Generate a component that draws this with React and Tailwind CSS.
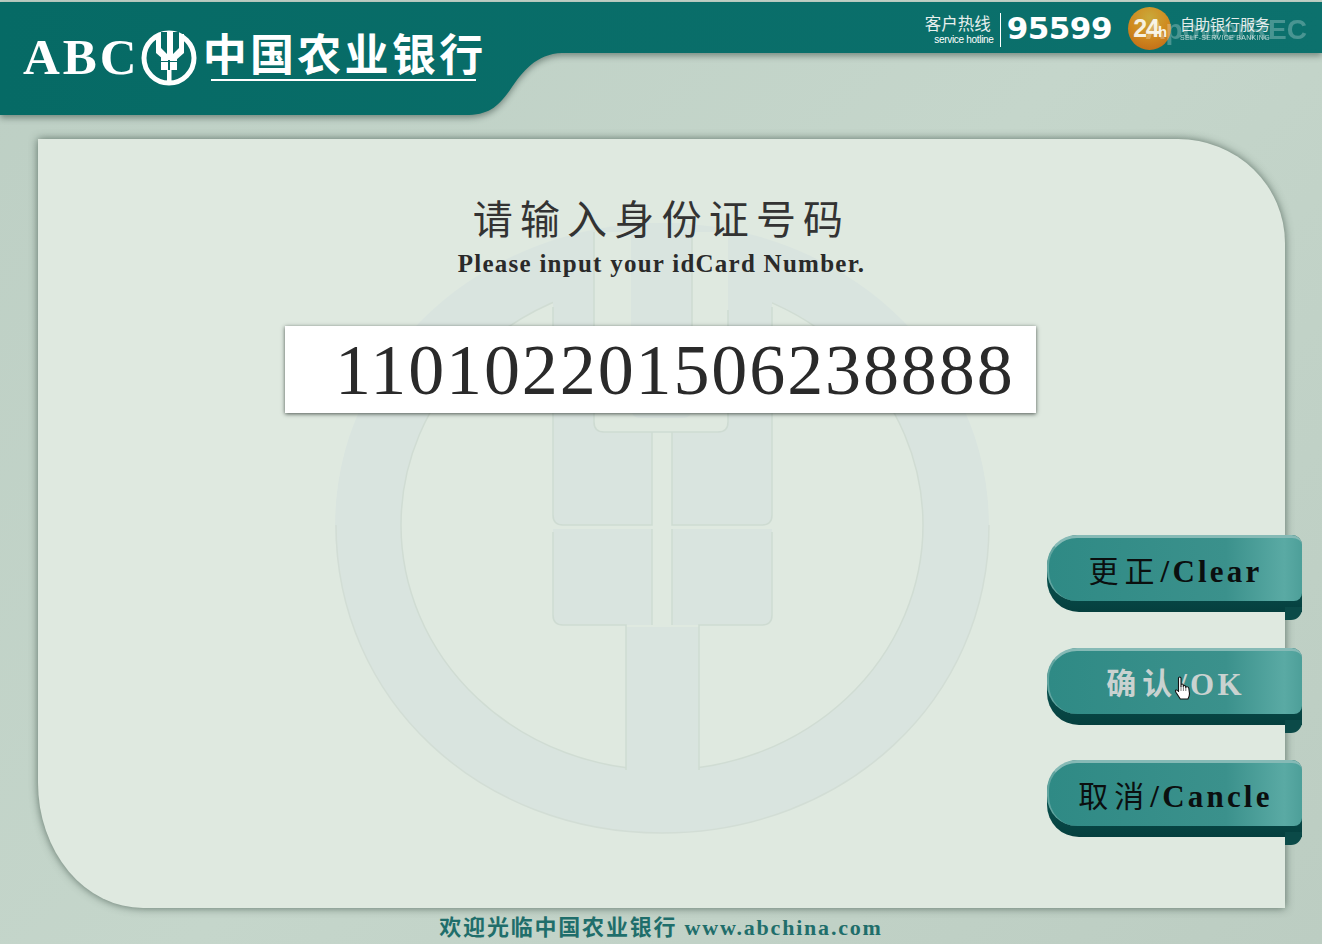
import React from "react";

const SERIF = "font-['Liberation_Serif','Noto_Sans_CJK_SC',serif]";

const buttons = [
    { zh: "更正", en: "/Clear", color: "text-[#0b0f0f]", weight: "font-normal" },
    { zh: "确认", en: "/OK", color: "text-[#c9d2d0]", weight: "font-bold" },
    { zh: "取消", en: "/Cancle", color: "text-[#0b0f0f]", weight: "font-normal" },
];

const HeaderShape = () => (
    <svg
        className="absolute inset-0 drop-shadow-[0_3px_3px_rgba(30,50,45,0.45)]"
        width="1322"
        height="120"
        viewBox="0 0 1322 120"
    >
        <defs>
            <linearGradient id="bar" x1="0" x2="1" y1="0" y2="0">
                <stop offset="0" stopColor="#066a65" />
                <stop offset="1" stopColor="#0c716d" />
            </linearGradient>
        </defs>
        <path
            d="M0 2H1322V53H562C536 54 523 71 510 90C497 108 488 115 465 115H0Z"
            fill="url(#bar)"
        />
    </svg>
);

const LogoMark = () => (
    <svg width="70" height="70" viewBox="0 0 70 70" className="-mx-[8px] -my-[8px]">
        <circle cx="35" cy="36" r="25" fill="none" stroke="#fff" strokeWidth="5" />
        <path d="M22 12h5v14l6 6v-22h6v22l6-6V12h5v19l-8 7H30l-8-7Z" fill="#fff" />
        <path d="M27 10h6v20l-6-5ZM39 10h6v15l-6 5Z" fill="#066a65" />
        <path d="M27 40h7v8h-7ZM36 40h7v8h-7ZM27 34h7v5h-7ZM36 34h7v5h-7Z" fill="#fff" />
        <rect x="33" y="48" width="4.5" height="13" fill="#fff" />
    </svg>
);

const Watermark = () => (
    <svg
        className="absolute inset-0"
        width="1247"
        height="769"
        viewBox="38 139 1247 769"
    >
        <defs>
            <clipPath id="ringClip">
                <ellipse cx="662" cy="525" rx="327" ry="302" />
            </clipPath>
        </defs>
        <ellipse cx="662" cy="525" rx="327" ry="308" fill="#d9e4df" clipPath="url(#ringClip)" />
        <path d="M336 525C336 700 480 833 662 833C845 833 989 700 989 525" fill="#d9e4df" stroke="#d2ddd5" strokeWidth="1.5" />
        <ellipse cx="662" cy="525" rx="261" ry="245" fill="#dfe9e0" stroke="#d0dcd3" strokeWidth="1.5" />
        <g clipPath="url(#ringClip)">
            <path d="M553 260H772V515Q772 525 762 525H672V625H652V525H563Q553 525 553 515Z" fill="#d9e4df" />
            <path d="M594 232H728V422Q728 432 718 432H604Q594 432 594 422Z" fill="#dfe9e0" />
            <path d="M631 200H692V408Q692 418 682 418H641Q631 418 631 408Z" fill="#d9e4df" />
            <path d="M652 432H672V625H652Z" fill="#dfe9e0" />
            <path d="M553 529H652V625H563Q553 625 553 615ZM672 529H772V615Q772 625 762 625H672Z" fill="#d9e4df" />
            <rect x="626" y="627" width="73" height="148" fill="#d9e4df" />
        </g>
        <g fill="none" stroke="#cedbd2" strokeWidth="1.5">
            <path d="M594 232V422Q594 432 604 432H718Q728 432 728 422V310" />
            <path d="M692 232V408" />
            <path d="M553 307V515Q553 525 563 525H652V432M672 432V525H762Q772 525 772 515V307" />
            <path d="M553 532V615Q553 625 563 625H626V770M699 770V625H762Q772 625 772 615V532" />
            <path d="M652 529V625M672 529V625" />
        </g>
    </svg>
);

const HandCursor = () => (
    <svg
        className="absolute left-[127px] top-[28px]"
        width="18"
        height="25"
        viewBox="0 0 18 25"
    >
        <path
            d="M4.5 2.2C4.5.6 7 .6 7 2.2V10.5V9C7 7.6 9.3 7.6 9.3 9V10.5C9.3 9.2 11.7 9.2 11.7 10.7V11.5C11.7 10.4 14.6 10.4 14.8 12.3L15.5 17.5C15.6 20 14.6 21.6 13.9 23H6.3L1.9 16.2C.6 14 2.5 12.9 4.5 15.5Z"
            fill="#fff"
            stroke="#111"
            strokeWidth="1.1"
            strokeLinejoin="round"
        />
        <path d="M7 10v5M9.4 10.5v4.5M11.8 11.5V15" stroke="#555" strokeWidth="0.8" />
    </svg>
);

const RibbonButton = ({ zh, en, color, weight, children }) => (
    <div className="relative h-[77px] w-[255px] rounded-l-[32px] rounded-tr-[10px] bg-[linear-gradient(180deg,#0f6360,#053f3e)]">
        <div
            className={`flex h-[66px] items-center justify-center rounded-l-[30px] rounded-tr-[10px] rounded-br-[8px] border-t-[3px] border-l-[2px] border-t-[#86bab6] border-l-[#62a5a0] bg-[linear-gradient(90deg,#2f8a85,#3b918c_70%,#5aaaa4_93%,#4d9f99)] pt-[4px] ${color}`}
        >
            <span className={`${SERIF} text-[30px] leading-none tracking-[6px] ${weight}`}>{zh}</span>
            <span className={`${SERIF} text-[31px] font-bold leading-none tracking-[3.2px]`}>{en}</span>
        </div>
        <div className="absolute right-0 top-[72px] h-[13px] w-[17px] rounded-br-[11px] bg-[#0b4a48]" />
        {children}
    </div>
);

export default function App() {
    return (
        <div className="h-[944px] w-[1322px] overflow-hidden bg-[linear-gradient(135deg,#bdcfc4,#c5d6cb_50%,#bccdc2)]">
            {/* cabecera */}
            <header className="relative flex h-[115px] items-start justify-between">
                <HeaderShape />
                <div className="relative flex items-start pl-[23px] pt-[30px] text-white">
                    <span className={`${SERIF} text-[51px] font-bold leading-[55px] tracking-[3px]`}>ABC</span>
                    <div className="ml-[2px] mr-[6px] h-[55px] w-[55px]">
                        <LogoMark />
                    </div>
                    <div className="-mt-[2px] flex flex-col">
                        <span className="font-['Noto_Sans_CJK_SC',sans-serif] text-[44px] font-bold leading-[48px] tracking-[3.3px]">
                            中国农业银行
                        </span>
                        <div className="ml-[8px] mt-[3px] h-[2px] w-[265px] bg-white" />
                    </div>
                </div>
                <div className="relative flex items-start pr-[52px] pt-[13px] text-white">
                    <div className="flex w-[71px] flex-col items-end">
                        <span className="mr-[3px] font-['Noto_Sans_CJK_SC',sans-serif] text-[16.5px] leading-[20px] text-[#e8f0ee]">
                            客户热线
                        </span>
                        <span className="mt-[1px] font-['Liberation_Sans',sans-serif] text-[10px] leading-[12px] tracking-[-0.3px]">
                            service hotline
                        </span>
                    </div>
                    <div className="ml-[6px] h-[34px] w-px bg-white" />
                    <span className="ml-[6px] font-['DejaVu_Sans',sans-serif] text-[31px] font-bold leading-[30px] tracking-[-0.5px]">
                        95599
                    </span>
                    <div className="-mt-[6px] ml-[16px] flex h-[43px] w-[43px] items-center justify-center rounded-full bg-[radial-gradient(circle_at_50%_25%,#c9a93a,#d08a1f_50%,#bd6414)]">
                        <span className="font-['Liberation_Sans',sans-serif] text-[25px] font-bold leading-none tracking-[-1.5px] text-[#f6f1e0]">
                            24<span className="text-[15px]">h</span>
                        </span>
                    </div>
                    <div className="ml-[9px] flex flex-col items-center pt-[1px] text-[#e4ecea]">
                        <span className="font-['Noto_Sans_CJK_SC',sans-serif] text-[15px] leading-[19px]">
                            自助银行服务
                        </span>
                        <span className="font-['Liberation_Sans',sans-serif] text-[7px] leading-[9px] tracking-[0.3px] opacity-80">
                            SELF-SERVICE BANKING
                        </span>
                    </div>
                </div>
                {/* marca de agua de la grabación */}
                <span className="absolute right-[15px] top-[14px] font-['Liberation_Sans',sans-serif] text-[28px] font-bold leading-[32px] text-white opacity-25">
                    ApowerREC
                </span>
            </header>

            <main className="relative ml-[38px] mt-[24px] flex h-[769px] w-[1247px] flex-col rounded-tr-[107px_104px] rounded-bl-[105px_125px] bg-[#dfe9e0] shadow-[0_0_9px_rgba(50,70,60,0.7)]">
                <Watermark />
                <div className="relative flex flex-col items-center pt-[55px]">
                    <h1 className={`${SERIF} text-[40px] font-normal leading-[54px] tracking-[7.2px] text-[#333]`}>
                        请输入身份证号码
                    </h1>
                    <p className={`${SERIF} mt-[1px] text-[25px] font-bold leading-[29px] tracking-[1.25px] text-[#2a2a2a]`}>
                        Please input your idCard Number.
                    </p>
                </div>
                <div
                    className={`${SERIF} relative ml-[247px] mt-[48px] flex h-[87px] w-[751px] items-center bg-white pl-[50px] text-[72px] leading-none tracking-[1.9px] text-[#2a2a2a] shadow-[0_1px_4px_rgba(40,50,45,0.8)]`}
                >
                    110102201506238888
                </div>
                <div className="relative -mr-[17px] ml-auto mt-[122px] flex w-[255px] flex-col gap-[35.5px]">
                    {buttons.map((b, i) => (
                        <RibbonButton key={b.zh} zh={b.zh} en={b.en} color={b.color} weight={b.weight}>
                            {i === 1 && <HandCursor />}
                        </RibbonButton>
                    ))}
                </div>
            </main>

            <footer className={`${SERIF} mt-[6px] text-center text-[22px] font-bold leading-[28px] tracking-[1.8px] text-[#1f6e6b]`}>
                欢迎光临中国农业银行 www.abchina.com
            </footer>
        </div>
    );
}
